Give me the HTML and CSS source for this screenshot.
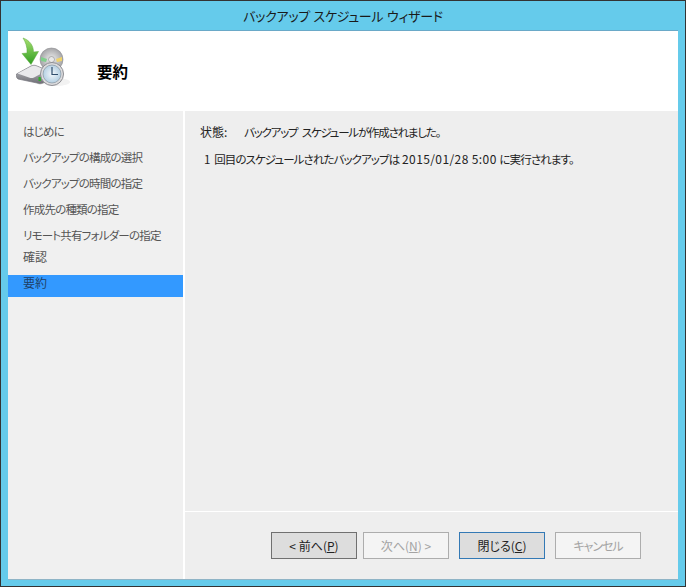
FILE: index.html
```html
<!DOCTYPE html>
<html lang="ja">
<head>
    <meta charset="UTF-8">
    <title>バックアップ スケジュール ウィザード</title>
    <link rel="stylesheet" href="styles.css">
</head>
<body>
    <div class="window">
        <div class="titlebar">バックアップ スケジュール ウィザード</div>
        <div class="client">
            <div class="header">
                <svg class="header-icon" width="56" height="50" viewBox="0 0 56 50">
                    <defs>
                        <linearGradient id="arrowFill" x1="0" y1="0" x2="0" y2="1">
                            <stop offset="0" stop-color="#a8e070"/>
                            <stop offset="1" stop-color="#2f9e22"/>
                        </linearGradient>
                        <linearGradient id="driveFill" x1="0" y1="0" x2="0" y2="1">
                            <stop offset="0" stop-color="#c4c4c8"/>
                            <stop offset="1" stop-color="#6f6f76"/>
                        </linearGradient>
                        <radialGradient id="discFill">
                            <stop offset="0" stop-color="#f0f0f0"/>
                            <stop offset="1" stop-color="#a5a5a8"/>
                        </radialGradient>
                        <radialGradient id="faceFill">
                            <stop offset="0" stop-color="#f2f7fb"/>
                            <stop offset="1" stop-color="#b4cfe2"/>
                        </radialGradient>
                    </defs>
                    <ellipse cx="40" cy="45" rx="14" ry="4" fill="#f2f2f2"/>
                    <circle cx="35.500" cy="22.500" r="11.500" fill="url(#discFill)" stroke="#8f8f92" stroke-width="0.6"/>
                    <path d="M25 20l6 2-1 3-5-1z" fill="#7fcf8a"/>
                    <path d="M46 20l-6 2 1 3 5-1z" fill="#efd36a"/>
                    <circle cx="35.500" cy="22.500" r="3" fill="#e8e8e8" stroke="#8a8a8a" stroke-width="0.6"/>
                    <path d="M0.500 37L15 29c2-1 4-1 6 0l12 5v9l-6 3c-2 1-4 1-6 0L2 42c-1.500-1-2-3-1.500-5z" fill="url(#driveFill)" stroke="#75757c" stroke-width="0.7"/>
                    <path d="M1.500 36.500L15 29.500c2-1 4-1 6 0l10 4-13 7c-2 .8-3 .8-5 0z" fill="#e9e9ec"/>
                    <rect x="22.500" y="40" width="2.500" height="4" fill="#2fae2a"/>
                    <path d="M7 1C13 3 17.500 8 17.500 15L22.500 14.500L15 27.500L6 16.500L11 16C11.500 10 9.500 5 7 1z" fill="url(#arrowFill)" stroke="#5aa83c" stroke-width="0.5"/>
                    <circle cx="36" cy="37" r="11.500" fill="#dcdcde" stroke="#8d8d92"/>
                    <circle cx="36" cy="37" r="9" fill="url(#faceFill)" stroke="#7b8a96" stroke-width="0.6"/>
                    <path d="M36 30v7.500h6" fill="none" stroke="#2f4d6c" stroke-width="1.200"/>
                </svg>
                <h1 class="header-title">要約</h1>
            </div>
            <div class="body">
                <ul class="steps">
                    <li>はじめに</li>
                    <li>バックアップの構成の選択</li>
                    <li>バックアップの時間の指定</li>
                    <li>作成先の種類の指定</li>
                    <li>リモート共有フォルダーの指定</li>
                    <li class="tight">確認</li>
                    <li class="current">要約</li>
                </ul>
                <div class="main">
                    <div class="content">
                        <div class="status">
                            <span class="status-label">状態:</span>
                            <span class="narrow status-text">バックアップ スケジュールが作成されました。</span>
                        </div>
                        <p class="next-run"><span class="narrow">1 回目のスケジュールされたバックアップは</span> <span class="date">2015/01/28 5:00</span> <span class="narrow">に実行されます。</span></p>
                    </div>
                    <div class="buttons">
                        <button class="btn btn-prev">&lt; 前へ(<u>P</u>)</button>
                        <button class="btn" disabled>次へ(<u>N</u>) &gt;</button>
                        <button class="btn btn-close">閉じる(<u>C</u>)</button>
                        <button class="btn btn-cancel" disabled>キャンセル</button>
                    </div>
                </div>
            </div>
        </div>
    </div>
</body>
</html>
```

FILE: styles.css
```css
* {
    box-sizing: border-box;
    font-family: "Noto Sans CJK JP", "Noto Sans", sans-serif;
    font-feature-settings: "palt";
}

html, body {
    margin: 0;
    height: 100%;
}

body {
    background: #65cbeb;
    font-size: 12px;
    color: #222222;
}

.window {
    width: 686px;
    height: 587px;
    border: 1px solid #333333;
    background: #65cbeb;
    padding: 0 7px 7px 7px;
    display: flex;
    flex-direction: column;
}

.titlebar {
    height: 30px;
    line-height: 30px;
    text-align: center;
    font-size: 13px;
    letter-spacing: -0.3px;
    word-spacing: 1px;
    color: #1a1a1a;
}

.client {
    flex: 1;
    display: flex;
    flex-direction: column;
    background: #ffffff;
    box-shadow: 0 -1px 0 #6aa9c8, 0 1px 0 #8fb4c6;
}

.header {
    height: 80px;
    display: flex;
    align-items: center;
    background: #ffffff;
}

.header-icon {
    margin: 0 0 18px 8px;
}

.header-title {
    margin: 0 0 0 25px;
    font-size: 15.5px;
    font-weight: bold;
    color: #000000;
}

.body {
    flex: 1;
    display: flex;
    gap: 2px;
    background: #ffffff;
}

.steps {
    width: 175px;
    margin: 0;
    padding: 12px 0 0 0;
    list-style: none;
    background: #f0f0f0;
    color: #555555;
    font-size: 11.5px;
    letter-spacing: -0.8px;
}

.steps li {
    height: 22px;
    line-height: 16px;
    margin-top: 4px;
    padding-left: 15px;
}

.steps li:first-child {
    margin-top: 0;
}

.steps li.tight {
    margin-top: 0;
    font-size: 12px;
    letter-spacing: 0;
}

.steps li.current {
    background: #3399ff;
    color: #1f3f66;
    font-size: 12px;
    letter-spacing: 0;
}

.main {
    flex: 1;
    display: flex;
    flex-direction: column;
    background: #eeeeee;
}

.content {
    flex: 1;
    padding: 13px 15px;
}

.status {
    display: flex;
    line-height: 16px;
}

.status-label {
    width: 44px;
}

.narrow {
    font-size: 11.5px;
    letter-spacing: -0.9px;
    word-spacing: 3px;
}

.status-text {
    letter-spacing: -1.2px;
}

.date {
    letter-spacing: 0.4px;
}

.next-run {
    margin: 11px 0 0 4px;
    line-height: 16px;
}

.buttons {
    height: 68px;
    border-top: 1px solid #ffffff;
    padding: 20px 0 0 86px;
    display: flex;
    gap: 6px;
}

.btn {
    width: 86px;
    height: 27px;
    padding: 0;
    font-size: 12px;
    color: #222222;
    background: #dddddd;
    border: 1px solid #707070;
}

.btn-close {
    margin: 0 4px;
    border-color: #3379b5;
}

.btn-cancel {
    letter-spacing: -1px;
}

.btn:disabled {
    background: #f4f4f4;
    border-color: #adadad;
    color: #a3a3a3;
}
```
